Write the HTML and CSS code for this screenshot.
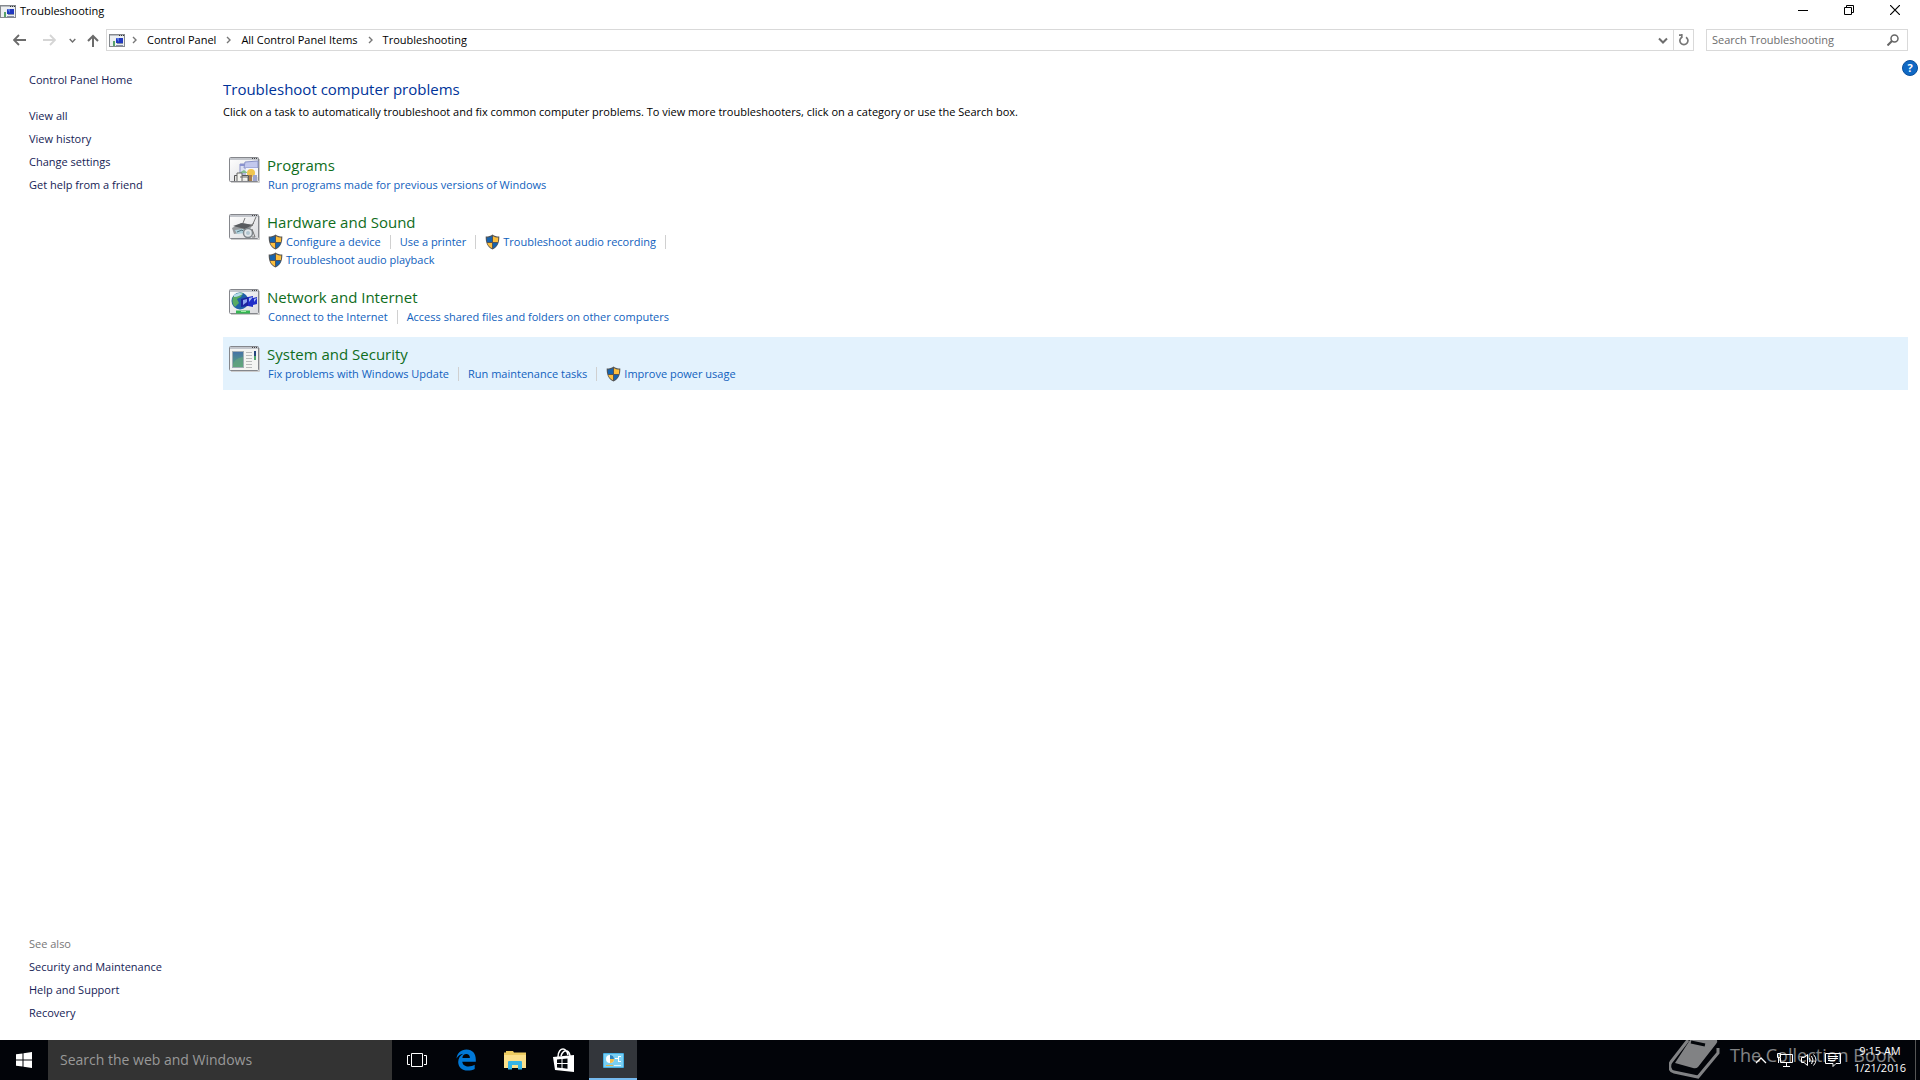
FILE: index.html
```html
<!DOCTYPE html>
<html lang="en">
<head>
    <meta charset="UTF-8">
    <meta name="viewport" content="width=device-width, initial-scale=1.0">
    <title>Troubleshooting</title>
    <link rel="stylesheet" href="styles.css">
</head>
<body>
    <!-- Shared icons -->
    <svg class="defs" width="0" height="0" aria-hidden="true">
        <defs>
            <linearGradient id="paper" x1="0" y1="0" x2="1" y2="1">
                <stop offset="0" stop-color="#fff"/>
                <stop offset="1" stop-color="#d9dadd"/>
            </linearGradient>
            <linearGradient id="screen" x1="0" y1="0" x2="0" y2="1">
                <stop offset="0" stop-color="#4671a8"/>
                <stop offset="1" stop-color="#58a878"/>
            </linearGradient>
            <symbol id="frame" viewBox="0 0 31 26">
                <path d="M2 25.500h28.500V2" fill="none" stroke="#ccc"/>
                <rect x="0.500" y="0.500" width="29" height="24" rx="1" fill="url(#paper)" stroke="#85878c"/>
                <path d="M1 2h28" stroke="#c3c6cc" stroke-width="2"/>
                <path d="M23 1.500h1M25 1.500h1M27 1.500h1" stroke="#444"/>
            </symbol>
            <symbol id="shield" viewBox="0 0 15 16">
                <path d="M7.500 0.500C5.500 2 3 2.600 0.700 2.500c-.1 6 1.300 10.500 6.800 13 5.500-2.500 6.900-7 6.800-13C12 2.600 9.500 2 7.500 0.500z" fill="#555"/>
                <path d="M7 2.300v5.700H2.100C1.900 6.500 1.800 5 1.800 3.600 3.800 3.600 5.500 3.200 7 2.300zM8 9h4.700c-.7 2.400-2.200 4.100-4.700 5.300z" fill="#1763ad"/>
                <path d="M8 2.300c1.500.9 3.200 1.300 5.200 1.300 0 1.400-.1 2.900-.3 4.400H8zM2.300 9H7v5.300C4.500 13.100 3 11.400 2.300 9z" fill="#fdbf3d"/>
            </symbol>
            <symbol id="trouble" viewBox="0 0 16 13">
                <rect x="0.500" y="0.500" width="15" height="12" fill="#eceff1" stroke="#85898e"/>
                <path d="M1 1.500h14" stroke="#b9bdc2"/>
                <path d="M10 1.500h1M12 1.500h1M14 1.500h1" stroke="#333"/>
                <path d="M7 4h7v5H7z" fill="#2138c0"/>
                <path d="M7 4h3v4z" fill="#5878e0"/>
                <path d="M4 7h2v5H4z" fill="#57a16a"/>
                <path d="M8 9h6v1H8zM7 11h7v1H7z" fill="#8790a8"/>
            </symbol>
            <symbol id="sep" viewBox="0 0 5 8">
                <path d="M1 1l3 3-3 3" fill="none" stroke="#777" stroke-width="1.400"/>
            </symbol>
            <symbol id="down" viewBox="0 0 10 7">
                <path d="M1 1.500l4 4 4-4" fill="none" stroke="#6d6d6d" stroke-width="2"/>
            </symbol>
        </defs>
    </svg>

    <div class="window">
        <header class="titlebar">
            <svg class="app-icon" width="16" height="13"><use href="#trouble"/></svg>
            <span>Troubleshooting</span>
            <div class="window-buttons">
                <button type="button" aria-label="Minimize"><svg width="10" height="10"><path d="M0 5.500h10" stroke="#000"/></svg></button>
                <button type="button" aria-label="Restore"><svg width="10" height="10" fill="none" stroke="#000"><path d="M2.500 2V0.500h7v7H8M0.500 2.500h7v7h-7z"/></svg></button>
                <button type="button" aria-label="Close"><svg width="10" height="10"><path d="M0 0l10 10M10 0L0 10" stroke="#000" stroke-width="1.200"/></svg></button>
            </div>
        </header>

        <div class="toolbar">
            <div class="history">
                <button type="button" aria-label="Back"><svg width="13" height="12" fill="none" stroke="#6b6b6b" stroke-width="1.800"><path d="M13 6H1M6 1L1 6l5 5"/></svg></button>
                <button type="button" aria-label="Forward"><svg width="13" height="12" fill="none" stroke="#d5d5d5" stroke-width="1.800"><path d="M0 6h12M7 1l5 5-5 5"/></svg></button>
                <button type="button" class="recent" aria-label="Recent locations"><svg width="7" height="5"><use href="#down"/></svg></button>
                <button type="button" class="up" aria-label="Up"><svg width="12" height="13" fill="none" stroke="#6b6b6b" stroke-width="2"><path d="M6 13V2M1 7l5-5 5 5"/></svg></button>
            </div>
            <div class="address">
                <svg width="16" height="13"><use href="#trouble"/></svg>
                <nav class="crumbs">
                    <svg width="5" height="8"><use href="#sep"/></svg>
                    <a href="#">Control Panel</a>
                    <svg width="5" height="8"><use href="#sep"/></svg>
                    <a href="#">All Control Panel Items</a>
                    <svg width="5" height="8"><use href="#sep"/></svg>
                    <a href="#">Troubleshooting</a>
                </nav>
                <button type="button" aria-label="Previous locations"><svg width="10" height="7"><use href="#down"/></svg></button>
                <button type="button" class="refresh" aria-label="Refresh"><svg width="10" height="12" fill="none" stroke="#777" stroke-width="1.700"><path d="M7 3.200A4 4 0 1 1 2.800 3.200M2.800 0v4M0 1.200h3.500"/></svg></button>
            </div>
            <form class="search">
                <input type="text" aria-label="Search Troubleshooting" placeholder="Search Troubleshooting">
                <button type="button" aria-label="Search"><svg width="12" height="12" fill="none" stroke="#666" stroke-width="1.500"><circle cx="7.500" cy="4.500" r="3.500"/><path d="M5 7l-4.500 4.500" stroke-width="2"/></svg></button>
            </form>
        </div>

        <div class="content">
            <aside class="sidebar">
                <nav>
                    <a class="home" href="#">Control Panel Home</a>
                    <a href="#">View all</a>
                    <a href="#">View history</a>
                    <a href="#">Change settings</a>
                    <a href="#">Get help from a friend</a>
                </nav>
                <nav>
                    <span class="see-also">See also</span>
                    <a href="#">Security and Maintenance</a>
                    <a href="#">Help and Support</a>
                    <a href="#">Recovery</a>
                </nav>
            </aside>

            <main>
                <h1>Troubleshoot computer problems</h1>
                <p class="intro">Click on a task to automatically troubleshoot and fix common computer problems. To view more troubleshooters, click on a category or use the Search box.</p>

                <section class="category">
                    <svg width="31" height="26" viewBox="0 0 31 26">
                        <use href="#frame"/>
                        <path d="M11 7h9v10h-9z" fill="#dce0f2" stroke="#8a93c8"/>
                        <path d="M11 7h9v2h-9z" fill="#8992cf"/>
                        <path d="M16 5l13-1v7H15z" fill="#c2c8ee" stroke="#8a93c8"/>
                        <path d="M17 11h12v9H17z" fill="#f4f5fb"/>
                        <path d="M10 16l5-3 4 3z" fill="#82be8e"/>
                        <circle cx="22" cy="16" r="4" fill="#f0c550"/>
                        <path d="M5.500 24v-5.500h14V24" fill="#e5e5e2" stroke="#555"/>
                        <path d="M8 24v-8h5v8M11 20h8v4" fill="#f4f4ef" stroke="#686868"/>
                        <path d="M20 18h3v6h-3z" fill="#a77d4d"/>
                        <path d="M24 18h4v6h-4z" fill="#9da5ce"/>
                    </svg>
                    <div>
                        <h2><a href="#">Programs</a></h2>
                        <ul>
                            <li><a href="#">Run programs made for previous versions of Windows</a></li>
                        </ul>
                    </div>
                </section>

                <section class="category">
                    <svg width="31" height="26" viewBox="0 0 31 26">
                        <use href="#frame"/>
                        <path d="M3 14l9-5 12 2-6 7-13 2z" fill="#979a9d"/>
                        <path d="M4 12l9-3 11 2-8 4z" fill="#585b5f"/>
                        <path d="M6 16l8-1 2 4-8 1z" fill="#afd1dc"/>
                        <path d="M8 18l5-2 3 3" fill="none" stroke="#53727e"/>
                        <path d="M14 9l2-5M23 12l4-9M20 13l5-4" fill="none" stroke="#777"/>
                        <circle cx="19" cy="19" r="4.500" fill="#e1e6e9" stroke="#80878c" stroke-width="1.500"/>
                        <circle cx="19" cy="19" r="2" fill="#b1c6d0"/>
                        <path d="M23 15l3 8h-3" fill="none" stroke="#777"/>
                    </svg>
                    <div>
                        <h2><a href="#">Hardware and Sound</a></h2>
                        <ul>
                            <li><a href="#"><svg width="15" height="16"><use href="#shield"/></svg>Configure a device</a></li>
                            <li><a href="#">Use a printer</a></li>
                            <li><a href="#"><svg width="15" height="16"><use href="#shield"/></svg>Troubleshoot audio recording</a></li>
                            <li><a href="#"><svg width="15" height="16"><use href="#shield"/></svg>Troubleshoot audio playback</a></li>
                        </ul>
                    </div>
                </section>

                <section class="category">
                    <svg width="31" height="26" viewBox="0 0 31 26">
                        <use href="#frame"/>
                        <circle cx="11" cy="12" r="8.500" fill="#205fa8"/>
                        <path d="M4 8c3-4 7-5 10-4l-2 4-4 2 2 4-4 4c-3-3-3-7-2-10z" fill="#57aa62"/>
                        <path d="M5 6c3-2 6-3 9-1-3 1-5 3-9 3z" fill="#b6dcec"/>
                        <path d="M12 10l7-2v9l-7 1z" fill="#1d24a0"/>
                        <path d="M14 11l4-1v3l-4 3z" fill="#8fa7f0"/>
                        <path d="M19 8l5-1v2l4-1v7l-4 1v2l-5-1z" fill="#202ec8"/>
                        <path d="M20 9l4-1-4 5zM25 10l3-1-3 4z" fill="#a9bdf5"/>
                        <path d="M7 23h14" stroke="#36b653" stroke-width="3"/>
                        <path d="M12 22.500h5" stroke="#9cf0a4"/>
                    </svg>
                    <div>
                        <h2><a href="#">Network and Internet</a></h2>
                        <ul>
                            <li><a href="#">Connect to the Internet</a></li>
                            <li><a href="#">Access shared files and folders on other computers</a></li>
                        </ul>
                    </div>
                </section>

                <section class="category selected">
                    <svg width="31" height="26" viewBox="0 0 31 26">
                        <use href="#frame"/>
                        <rect x="1" y="3" width="28" height="21" fill="#f4f4f2"/>
                        <rect x="3.500" y="5.500" width="11" height="16" fill="url(#screen)" stroke="#a2aeb5"/>
                        <path d="M4 18c3-6 6-6 10-7v10H4z" fill="#65a47d" opacity=".7"/>
                        <path d="M17 6.500h6M17 9.500h6M17 12.500h6M17 15.500h6M17 18.500h6M17 21.500h6" stroke="#b9b9b9"/>
                        <path d="M26 5v5" stroke="#27457d" stroke-width="2"/>
                        <path d="M26 10v4" stroke="#50a56d" stroke-width="2"/>
                    </svg>
                    <div>
                        <h2><a href="#">System and Security</a></h2>
                        <ul>
                            <li><a href="#">Fix problems with Windows Update</a></li>
                            <li><a href="#">Run maintenance tasks</a></li>
                            <li><a href="#"><svg width="15" height="16"><use href="#shield"/></svg>Improve power usage</a></li>
                        </ul>
                    </div>
                </section>
                <button type="button" class="help" aria-label="Help">?</button>
            </main>
        </div>
    </div>

    <footer class="taskbar">
        <button type="button" aria-label="Start"><svg width="16" height="16" fill="#fff"><path d="M0 2.300L6.500 1.400v6.100H0zM7.500 1.200L16 0v7.500H7.500zM0 8.500h6.500v6.100L0 13.700zM7.500 8.500H16V16l-8.500-1.200z"/></svg></button>
        <input type="text" class="web-search" aria-label="Search the web and Windows" placeholder="Search the web and Windows">
        <div class="apps">
            <button type="button" aria-label="Task View"><svg width="20" height="14" fill="none" stroke="#fff"><path d="M4.500 0.500h11v13h-11zM3 2.500H0.500v9H3M17 2.500h2.500v9H17"/></svg></button>
            <button type="button" aria-label="Microsoft Edge"><svg width="20" height="22" viewBox="0 0 20 22"><path d="M0.500 9.500C1.200 4 4.800 0.500 10.500 0.500c6 0 9.300 4.300 9.300 10v2.300H6.300c.2 3.200 3 4.700 6.200 4.700 2.300 0 4.300-.6 6.200-1.700v4.300c-2 1-4.300 1.500-6.900 1.500C6 21.600 2.200 18.200 2.200 13c0-3.600 2-6.600 5.100-8.200C4.300 5.200 2 6.800 0.500 9.500zM6.400 9h7.500c0-2.700-1.400-4-3.600-4S6.600 6.600 6.400 9z" fill="#0078d7"/></svg></button>
            <button type="button" aria-label="File Explorer"><svg width="22" height="19" viewBox="0 0 22 19"><path d="M0 1.500h2V0h7l1 1.500h12V17H0z" fill="#edcc60"/><path d="M0 4h22v13H0z" fill="#fbe08a"/><path d="M4 18.500V11q0-1 1-1h12q1 0 1 1v7.500h-4V14H8v4.500z" fill="#37b4e5"/></svg></button>
            <button type="button" aria-label="Store"><svg width="22" height="24" viewBox="0 0 22 24"><path d="M5 9C5 3 8 1 10 1s4 2 5 6M8 8c1-4 4-6 6-5s3 3 3 6" fill="none" stroke="#fff" stroke-width="1.500"/><path d="M0 9l21-2v17L2 22z" fill="#fff"/><path d="M4 11.500l4.500-.5v4H4zM9.500 11l5-.5V15h-5zM4 16h4.500v4L4 19.500zM9.500 16h5v4.700l-5-.6z" fill="#05080c"/></svg></button>
            <button type="button" class="active" aria-label="Control Panel"><svg width="21" height="15" viewBox="0 0 21 15"><rect width="21" height="15" rx="1" fill="#46aee2"/><rect x="1" y="1" width="19" height="13" fill="#79cff2"/><circle cx="7" cy="6" r="4" fill="#fff"/><path d="M7 6V2a4 4 0 0 1 4 4z" fill="#2b82be"/><path d="M7 6h4a4 4 0 0 1-4 4z" fill="#f4bc48"/><path d="M12 5.500h3M15.500 3v6M15 3.500h3M15 8.500h3" stroke="#fff"/><path d="M3 12.500h7" stroke="#e2b243"/><path d="M11 12.500h7" stroke="#def3fc"/></svg></button>
        </div>
        <div class="tray">
            <button type="button" aria-label="Show hidden icons"><svg width="12" height="8" fill="none" stroke="#fff" stroke-width="1.300"><path d="M1 7l5-5 5 5"/></svg></button>
            <button type="button" aria-label="Network"><svg width="16" height="14" fill="none" stroke="#fff"><path d="M4 1.500h11.500v8H3.500V5M9.500 10v3M6 13.500h7M0.500 0.500h3v4h-3zM1.500 5v5"/></svg></button>
            <button type="button" aria-label="Volume"><svg width="16" height="14" fill="none" stroke="#fff"><path d="M0.500 4.500H3L6.500 1.500v11L3 9.500H0.500zM8.500 5q1 2 0 4M10.500 3q3 4 0 8M12.500 1.500q5 5.500 0 11"/></svg></button>
            <button type="button" aria-label="Notifications"><svg width="16" height="16" fill="none" stroke="#fff"><path d="M0.500 1.500h15v10H11l-3 3v-3H0.500zM3 4.500h10M3 6.500h10M3 8.500h7"/></svg></button>
            <div class="clock"><time>9:15 AM</time><time>1/21/2016</time></div>
            <button type="button" class="show-desktop" aria-label="Show desktop"></button>
        </div>
        <div class="watermark">
            <svg width="52" height="40" viewBox="0 0 52 40"><path d="M19 0L2 22c-2 3-2 9 3 10l24 5L49 13V8" fill="none" stroke="#fff" stroke-width="3"/><path d="M21 0h27q1 2-1 4L29 27q-2 2-5 1L6 23z" fill="#fff"/><path d="M22 2l14 3" stroke="#05080c" stroke-width="3"/></svg>
            <span>The Collection Book</span>
        </div>
    </footer>
</body>
</html>
```
FILE: styles.css
```css
* {
    box-sizing: border-box;
    margin: 0;
    padding: 0;
}
body {
    display: flex;
    flex-direction: column;
    min-height: 100vh;
    font-family: "Open Sans", "Noto Sans", sans-serif;
    font-size: 11px;
    line-height: 18px;
    color: #000;
    background: #fff;
}
button, input {
    border: none;
    background: none;
    font: inherit;
}
button {
    display: flex;
    align-items: center;
    justify-content: center;
}
a {
    text-decoration: none;
}
svg {
    flex-shrink: 0;
}
.defs {
    position: absolute;
}
.window {
    flex: 1;
    display: flex;
    flex-direction: column;
}

/* Title bar */
.titlebar {
    display: flex;
    align-items: center;
    gap: 4px;
    height: 22px;
}
.window-buttons {
    display: flex;
    align-self: flex-start;
    margin-left: auto;
    gap: 1px;
    padding-right: 3px;
}
.window-buttons button {
    width: 45px;
    height: 20px;
}

/* Navigation */
.toolbar {
    display: flex;
    align-items: center;
    height: 36px;
    padding: 0 12px 0 0;
}
.history {
    display: flex;
    width: 106px;
    padding-left: 4px;
}
.history button {
    width: 30px;
    height: 22px;
}
.history .recent {
    width: 16px;
}
.history .up {
    width: 26px;
}
.address {
    flex: 1;
    display: flex;
    align-items: center;
    height: 22px;
    padding-left: 2px;
    border: 1px solid #d9d9d9;
}
.crumbs {
    flex: 1;
    display: flex;
    align-items: center;
    gap: 10px;
    padding-left: 7px;
}
.crumbs a {
    color: #000;
}
.address button {
    width: 20px;
    height: 20px;
}
.address .refresh {
    border-left: 1px solid #d9d9d9;
}
.search {
    display: flex;
    width: 202px;
    height: 22px;
    margin-left: 12px;
    border: 1px solid #d9d9d9;
}
.search input {
    flex: 1;
    min-width: 0;
    padding-left: 5px;
}
.search input::placeholder {
    color: #6d6d6d;
}
.search button {
    width: 28px;
}

/* Content */
.content {
    flex: 1;
    display: flex;
}
.sidebar {
    display: flex;
    flex-direction: column;
    justify-content: space-between;
    width: 223px;
    padding: 10px 0 16px 29px;
}
.sidebar nav {
    display: flex;
    flex-direction: column;
    align-items: flex-start;
    line-height: 23px;
}
.sidebar a {
    color: #151c55;
}
.sidebar .home {
    margin-bottom: 13px;
}
.see-also {
    color: #777;
}
main {
    position: relative;
    flex: 1;
    padding: 20px 12px 0 0;
}
h1 {
    font-size: 15px;
    font-weight: 400;
    line-height: 22px;
    color: #003399;
}
.intro {
    margin: 2px 0 26px;
    line-height: 20px;
}
.category {
    display: flex;
    gap: 7px;
    margin-bottom: 4px;
    padding: 6px;
}
.category > svg {
    margin-top: 3px;
}
.category.selected {
    background: #e3f2fd;
}
.category h2 {
    font-size: 15px;
    font-weight: 400;
    line-height: 22px;
}
.category h2 a {
    color: #0f6d1c;
}
.category ul {
    display: flex;
    flex-wrap: wrap;
    max-width: 420px;
    padding: 0 0 1px 1px;
    list-style: none;
}
.selected ul {
    max-width: 520px;
}
.category li {
    display: flex;
    align-items: center;
}
.category li:not(:last-child)::after {
    content: "";
    height: 14px;
    margin: 0 9px;
    border-left: 1px solid #d0d0d0;
}
.category li a {
    display: flex;
    align-items: center;
    gap: 3px;
    color: #1061bd;
}
.help {
    position: absolute;
    top: 2px;
    right: 2px;
    width: 16px;
    height: 16px;
    border: 1px solid #0a4f9c;
    border-radius: 50%;
    background: #0f68c4;
    color: #fff;
    font-weight: 700;
}

/* Taskbar */
.taskbar {
    position: relative;
    display: flex;
    height: 40px;
    background: #020409;
    color: #fff;
}
.taskbar button {
    width: 48px;
}
.web-search {
    width: 344px;
    padding: 0 12px;
    background: #333;
    font-size: 14px;
}
.web-search::placeholder {
    color: #999;
}
.apps {
    display: flex;
    gap: 1px;
    margin-left: 1px;
}
.apps .active {
    padding-top: 2px;
    border-bottom: 2px solid #76b9ed;
    background: #33363b;
}
.tray {
    display: flex;
    margin-left: auto;
}
.tray button {
    width: 24px;
}
.clock {
    display: flex;
    flex-direction: column;
    justify-content: center;
    width: 70px;
    padding-bottom: 2px;
    line-height: 17px;
    text-align: center;
}
.tray .show-desktop {
    width: 5px;
    border-left: 1px solid #555;
}
.watermark {
    position: absolute;
    top: 0;
    right: 24px;
    display: flex;
    gap: 9px;
    opacity: .5;
    font-size: 18px;
    line-height: 30px;
    pointer-events: none;
}
```
